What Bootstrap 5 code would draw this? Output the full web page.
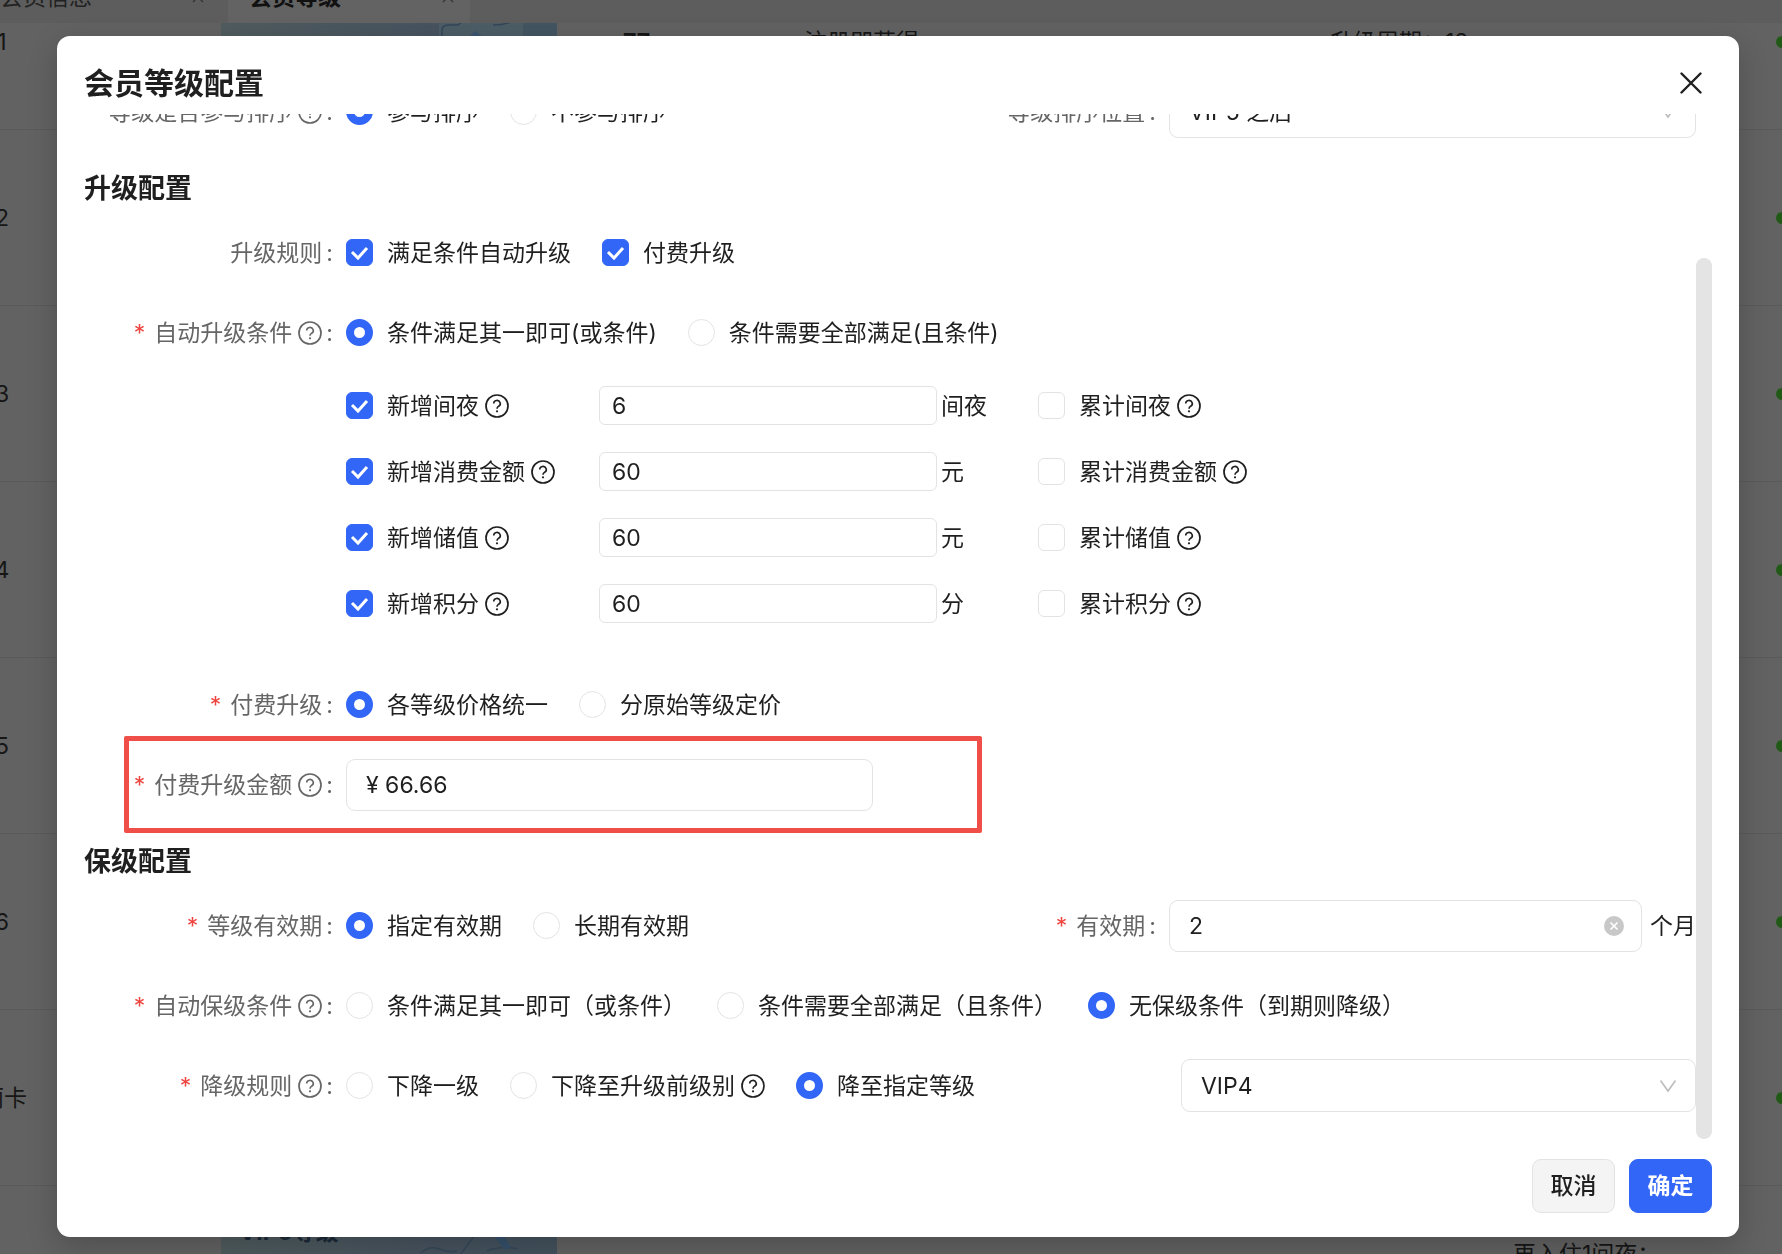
<!DOCTYPE html>
<html lang="zh-CN">
<head>
<meta charset="utf-8">
<meta name="viewport" content="width=device-width, initial-scale=1">
<title>会员等级配置</title>
<link href="https://cdn.jsdelivr.net/npm/bootstrap@5.3.0/dist/css/bootstrap.min.css" rel="stylesheet">
<style>
  :root { --blue: #3166f6; --ink: #1f1f1f; --muted-ink: #666; --line: #e3e3e3; --label-w: 262px; --side-w: 296px; }
  body { font-family: Inter, "Noto Sans CJK SC", sans-serif; font-size: 23px; line-height: 36px; color: var(--ink); background: #646464; }

  /* dimmed page behind the dialog */
  .backpage { background: #626262; color: #161616; z-index: 0; }
  .tabstrip { height: 23px; background: #5d5d5d; }
  .tabstrip a { height: 36px; margin-top: -21px; color: #222; text-decoration: none; }
  .tabstrip svg { margin-top: 12px; }
  .tab-info { width: 228px; }
  .tab-level { width: 242px; padding-left: 21px; }
  .tabstrip .tab-level { height: 45px; background: #636363; font-weight: 700; color: #111; }
  .listview { margin-top: -69px; }
  .listrow { display: grid; grid-template-columns: 42px 198px 402px 181px 526px 1fr; height: 176px; flex: none; margin-left: -19px; border-bottom: 1px solid #5a5a5a; }
  .thumb { width: 336px; height: 150px; padding: 15px 18px; background: linear-gradient(100deg, #505c5e, #47535f 60%, #43525d); color: #1c2938; font-weight: 700; position: relative; }
  .thumb svg { position: absolute; right: 0; top: 0; }
  .statusdot { width: 12px; height: 12px; margin-right: -6px; background: #215a17; }
  .twoline { min-height: 76px; margin-left: 183px; }

  /* dialog */
  .stage { padding: 36px 43px 17px 57px; z-index: 1; }
  .dialog { border-radius: 13px; box-shadow: 0 10px 30px rgba(0,0,0,.2); padding: 0 27px 24px; }
  .dialog-head { height: 78px; padding-top: 16px; }
  .dialog-head h1 { font-size: 30px; line-height: 42px; font-weight: 700; margin: 0; }
  .closer { margin-right: 10px; }
  .closer svg { display: block; }
  .section-title { font-size: 27px; line-height: 44px; font-weight: 700; padding-top: 2px; margin: 0 0 15px; }
  .field { min-height: 53px; margin-bottom: 27px; flex: none; }
  .pair { display: grid; grid-template-columns: var(--label-w) 1fr var(--side-w) 1fr; }
  .caption { width: var(--label-w); flex: none; color: var(--muted-ink); display: flex; align-items: center; justify-content: flex-end; padding-right: 13px; white-space: nowrap; }
  .caption.side { width: auto; }
  .caption.need::before { content: "*"; color: #ee4540; margin-right: 9px; }
  .caption::after { content: ":"; margin-left: 4px; }
  .options { display: flex; align-items: center; gap: 31px; white-space: nowrap; }
  .pick { display: flex; align-items: center; gap: 14px; white-space: nowrap; }
  .pick label { display: flex; align-items: center; }
  .hint { width: 24px; height: 24px; margin-left: 6px; flex: none; }
  .pick .form-check-input { width: 27px; height: 27px; margin: 0; flex: none; border: 1px solid var(--line); }
  .pick .form-check-input[type=checkbox] { border-radius: 6px; }
  .pick .form-check-input[type=checkbox]:checked { border-color: var(--blue); background: var(--blue) url("data:image/svg+xml,%3csvg xmlns='http://www.w3.org/2000/svg' viewBox='0 0 27 27'%3e%3cpath fill='none' stroke='%23fff' stroke-width='3' d='M6 13l6 6 9-10'/%3e%3c/svg%3e") center / 27px 27px no-repeat; }
  .pick .form-check-input[type=radio]:checked { border: 8px solid var(--blue); background: #fff; }
  .textbox { font-size: 23px; line-height: 36px; color: var(--ink); border: 1px solid var(--line); background: #fff none; height: 52px; padding: 0 19px; border-radius: 9px; }
  .textbox.low { height: 39px; padding: 0 12px; border-radius: 6px; }
  select.textbox { height: 53px; }
  .chevron { position: absolute; right: 19px; top: 50%; margin-top: -7px; pointer-events: none; }
  .clearer { position: absolute; right: 18px; top: 50%; margin-top: -10px; line-height: 0; }
  .narrow-select { width: calc((100% - 558px) / 2 - 12px); }
  .conditions { padding-left: var(--label-w); display: grid; grid-template-columns: 253px 439px 1fr; row-gap: 27px; margin-bottom: 55px; }
  .conditions > div { height: 39px; }
  .conditions .textbox { width: 338px; }
  .marked { position: absolute; left: 40px; right: 714px; top: -22px; bottom: -22px; border: 5px solid #f04e48; border-radius: 2px; pointer-events: none; }
  .rail { width: 16px; }
  .rail-thumb { height: 86%; background: #e4e4e4; }
  .dialog-foot { padding-top: 20px; gap: 14px; }
  .dialog-foot .btn { width: 83px; height: 54px; padding: 0; font-size: 23px; font-weight: 500; border-radius: 9px; }
  .btn-cancel { background: #f4f4f4; border: 1px solid var(--line); color: var(--ink); }
  .dialog-foot .btn-sure { background: var(--blue); border-color: var(--blue); color: #fff; font-weight: 700; }
</style>
<script src="https://cdn.jsdelivr.net/npm/bootstrap@5.3.0/dist/js/bootstrap.bundle.min.js"></script>
</head>
<body class="vh-100 overflow-hidden">

<svg width="0" height="0" class="position-absolute" aria-hidden="true">
  <symbol id="ask" viewBox="0 0 24 24">
    <circle cx="12" cy="12" r="11" fill="none" stroke="currentColor" stroke-width="1.700"/>
    <path d="M8.700 9.600a3.300 3.100 0 1 1 5 2.600c-1.100.7-1.700 1.200-1.700 2.500" fill="none" stroke="currentColor" stroke-width="1.600"/>
    <circle cx="12" cy="17.300" r="1.100" fill="currentColor"/>
  </symbol>
  <symbol id="down" viewBox="0 0 18 14"><path d="M1.500 1.500L9 12l7.500-10.500" fill="none" stroke="#bdbdbd" stroke-width="1.600"/></symbol>
  <symbol id="tabx" viewBox="0 0 12 12"><path d="M1 1l10 10M11 1L1 11" fill="none" stroke="#333" stroke-width="1.300"/></symbol>
</svg>

<div class="backpage position-fixed top-0 start-0 w-100 h-100 overflow-hidden d-flex flex-column" aria-hidden="true">
  <nav class="tabstrip d-flex overflow-hidden flex-shrink-0">
    <a href="#" class="tab-info d-flex justify-content-between pe-4"><span>会员信息</span><svg width="12" height="12"><use href="#tabx"/></svg></a>
    <a href="#" class="tab-level d-flex justify-content-between pe-3"><span>会员等级</span><svg width="12" height="12"><use href="#tabx"/></svg></a>
  </nav>
  <div class="overflow-hidden flex-fill">
    <div class="listview d-flex flex-column">
      <div class="listrow align-items-center"><span class="text-center">1</span><span></span>
        <span class="thumb"><svg width="118" height="150" viewBox="0 0 118 150"><path d="M0 0h84v150H0z" fill="#4d5d66"/><path d="M84 0h34v150H84z" fill="#435561"/><path d="M3 150V64q0-6 6-6h10q5-4 8-4M54 58q10 0 18-3" fill="none" stroke="#33465a" stroke-width="1.500"/><path d="M30 70l6-6 8 6z" fill="#3c5470"/></svg></span>
        <strong>77</strong><span>注册即获得</span><span class="d-flex justify-content-between align-items-center"><span>升级周期：12</span><i class="statusdot rounded-circle"></i></span></div>
      <div class="listrow align-items-center"><span class="text-center">2</span><span></span><span></span><span></span><span></span><i class="statusdot rounded-circle ms-auto"></i></div>
      <div class="listrow align-items-center"><span class="text-center">3</span><span></span><span></span><span></span><span></span><i class="statusdot rounded-circle ms-auto"></i></div>
      <div class="listrow align-items-center"><span class="text-center">4</span><span></span><span></span><span></span><span></span><i class="statusdot rounded-circle ms-auto"></i></div>
      <div class="listrow align-items-center"><span class="text-center">5</span><span></span><span></span><span></span><span></span><i class="statusdot rounded-circle ms-auto"></i></div>
      <div class="listrow align-items-center"><span class="text-center">6</span><span></span><span></span><span></span><span></span><i class="statusdot rounded-circle ms-auto"></i></div>
      <div class="listrow align-items-center"><span class="text-center text-nowrap">丽卡</span><span></span><span></span><span></span><span></span><i class="statusdot rounded-circle ms-auto"></i></div>
      <div class="listrow align-items-center"><span></span><span></span>
        <span class="thumb">VIP6等级<svg width="140" height="150" viewBox="0 0 140 150"><path d="M58 36l-18 24M4 54q8-8 18-4t18 2M70 52q14-6 30-2" fill="none" stroke="#35485a" stroke-width="1.500"/><path d="M76 36h10l8 12-6 3z" fill="#36516b"/></svg></span>
        <span></span><span></span><span class="twoline">再入住1间夜：</span></div>
    </div>
  </div>
</div>

<main class="stage position-relative vh-100 w-100">
  <form class="dialog bg-white h-100 d-flex flex-column">
    <header class="dialog-head d-flex align-items-center justify-content-between flex-shrink-0">
      <h1>会员等级配置</h1>
      <button type="button" class="closer border-0 bg-transparent p-0" aria-label="关闭"><svg width="22" height="22" viewBox="0 0 22 22"><path d="M1.500 1.500l19 19M20.500 1.500l-19 19" stroke="#1f1f1f" stroke-width="2.400" stroke-linecap="round"/></svg></button>
    </header>

    <div class="d-flex flex-fill overflow-hidden">
      <div class="flex-fill d-flex flex-column justify-content-end overflow-hidden">

        <div class="field pair align-items-center">
          <span class="caption">等级是否参与排序<svg class="hint"><use href="#ask"/></svg></span>
          <div class="options">
            <div class="pick"><input class="form-check-input" type="radio" name="sort" id="s1" checked><label for="s1">参与排序</label></div>
            <div class="pick"><input class="form-check-input" type="radio" name="sort" id="s2"><label for="s2">不参与排序</label></div>
          </div>
          <label class="caption side" for="pos">等级排序位置</label>
          <div class="position-relative"><select class="form-select textbox" id="pos"><option>VIP5 之后</option></select><svg class="chevron" width="18" height="14"><use href="#down"/></svg></div>
        </div>

        <h2 class="section-title">升级配置</h2>

        <div class="field d-flex align-items-center">
          <span class="caption">升级规则</span>
          <div class="options">
            <div class="pick"><input class="form-check-input" type="checkbox" id="u1" checked><label for="u1">满足条件自动升级</label></div>
            <div class="pick"><input class="form-check-input" type="checkbox" id="u2" checked><label for="u2">付费升级</label></div>
          </div>
        </div>

        <div class="field d-flex align-items-center">
          <span class="caption need">自动升级条件<svg class="hint"><use href="#ask"/></svg></span>
          <div class="options">
            <div class="pick"><input class="form-check-input" type="radio" name="auto" id="a1" checked><label for="a1">条件满足其一即可(或条件)</label></div>
            <div class="pick"><input class="form-check-input" type="radio" name="auto" id="a2"><label for="a2">条件需要全部满足(且条件)</label></div>
          </div>
        </div>

        <div class="conditions">
          <div class="pick"><input class="form-check-input" type="checkbox" id="n1" checked><label for="n1">新增间夜<svg class="hint"><use href="#ask"/></svg></label></div>
          <div class="d-flex align-items-center gap-1"><input class="form-control textbox low" type="text" value="6" id="v1" aria-label="新增间夜"><label for="v1">间夜</label></div>
          <div class="pick"><input class="form-check-input" type="checkbox" id="t1"><label for="t1">累计间夜<svg class="hint"><use href="#ask"/></svg></label></div>

          <div class="pick"><input class="form-check-input" type="checkbox" id="n2" checked><label for="n2">新增消费金额<svg class="hint"><use href="#ask"/></svg></label></div>
          <div class="d-flex align-items-center gap-1"><input class="form-control textbox low" type="text" value="60" id="v2" aria-label="新增消费金额"><label for="v2">元</label></div>
          <div class="pick"><input class="form-check-input" type="checkbox" id="t2"><label for="t2">累计消费金额<svg class="hint"><use href="#ask"/></svg></label></div>

          <div class="pick"><input class="form-check-input" type="checkbox" id="n3" checked><label for="n3">新增储值<svg class="hint"><use href="#ask"/></svg></label></div>
          <div class="d-flex align-items-center gap-1"><input class="form-control textbox low" type="text" value="60" id="v3" aria-label="新增储值"><label for="v3">元</label></div>
          <div class="pick"><input class="form-check-input" type="checkbox" id="t3"><label for="t3">累计储值<svg class="hint"><use href="#ask"/></svg></label></div>

          <div class="pick"><input class="form-check-input" type="checkbox" id="n4" checked><label for="n4">新增积分<svg class="hint"><use href="#ask"/></svg></label></div>
          <div class="d-flex align-items-center gap-1"><input class="form-control textbox low" type="text" value="60" id="v4" aria-label="新增积分"><label for="v4">分</label></div>
          <div class="pick"><input class="form-check-input" type="checkbox" id="t4"><label for="t4">累计积分<svg class="hint"><use href="#ask"/></svg></label></div>
        </div>

        <div class="field d-flex align-items-center">
          <span class="caption need">付费升级</span>
          <div class="options">
            <div class="pick"><input class="form-check-input" type="radio" name="pay" id="p1" checked><label for="p1">各等级价格统一</label></div>
            <div class="pick"><input class="form-check-input" type="radio" name="pay" id="p2"><label for="p2">分原始等级定价</label></div>
          </div>
        </div>

        <div class="field pair align-items-center position-relative">
          <label class="caption need" for="fee">付费升级金额<svg class="hint"><use href="#ask"/></svg></label>
          <input class="form-control textbox" type="text" id="fee" value="¥ 66.66">
          <div class="marked"></div>
        </div>

        <h2 class="section-title">保级配置</h2>

        <div class="field pair align-items-center">
          <span class="caption need">等级有效期</span>
          <div class="options">
            <div class="pick"><input class="form-check-input" type="radio" name="valid" id="l1" checked><label for="l1">指定有效期</label></div>
            <div class="pick"><input class="form-check-input" type="radio" name="valid" id="l2"><label for="l2">长期有效期</label></div>
          </div>
          <label class="caption side need" for="months">有效期</label>
          <div class="d-flex align-items-center">
            <div class="position-relative flex-fill">
              <input class="form-control textbox" type="text" id="months" value="2">
              <button type="button" class="clearer border-0 bg-transparent p-0" aria-label="清除"><svg width="20" height="20" viewBox="0 0 20 20"><circle cx="10" cy="10" r="10" fill="#c8c8c8"/><path d="M6.500 6.500l7 7M13.500 6.500l-7 7" stroke="#fff" stroke-width="1.600"/></svg></button>
            </div>
            <span class="ps-2 text-nowrap">个月</span>
          </div>
        </div>

        <div class="field d-flex align-items-center">
          <span class="caption need">自动保级条件<svg class="hint"><use href="#ask"/></svg></span>
          <div class="options">
            <div class="pick"><input class="form-check-input" type="radio" name="keep" id="k1"><label for="k1">条件满足其一即可（或条件）</label></div>
            <div class="pick"><input class="form-check-input" type="radio" name="keep" id="k2"><label for="k2">条件需要全部满足（且条件）</label></div>
            <div class="pick"><input class="form-check-input" type="radio" name="keep" id="k3" checked><label for="k3">无保级条件（到期则降级）</label></div>
          </div>
        </div>

        <div class="field d-flex align-items-center">
          <span class="caption need">降级规则<svg class="hint"><use href="#ask"/></svg></span>
          <div class="options">
            <div class="pick"><input class="form-check-input" type="radio" name="down" id="d1"><label for="d1">下降一级</label></div>
            <div class="pick"><input class="form-check-input" type="radio" name="down" id="d2"><label for="d2">下降至升级前级别<svg class="hint"><use href="#ask"/></svg></label></div>
            <div class="pick"><input class="form-check-input" type="radio" name="down" id="d3" checked><label for="d3">降至指定等级</label></div>
          </div>
          <div class="position-relative ms-auto narrow-select"><select class="form-select textbox" aria-label="指定等级"><option>VIP4</option></select><svg class="chevron" width="18" height="14"><use href="#down"/></svg></div>
        </div>
      </div>
      <div class="rail d-flex flex-column justify-content-end flex-shrink-0"><div class="rail-thumb rounded-pill"></div></div>
    </div>

    <footer class="dialog-foot d-flex justify-content-end flex-shrink-0">
      <button type="button" class="btn btn-cancel">取消</button>
      <button type="submit" class="btn btn-sure">确定</button>
    </footer>
  </form>
</main>
</body>
</html>
